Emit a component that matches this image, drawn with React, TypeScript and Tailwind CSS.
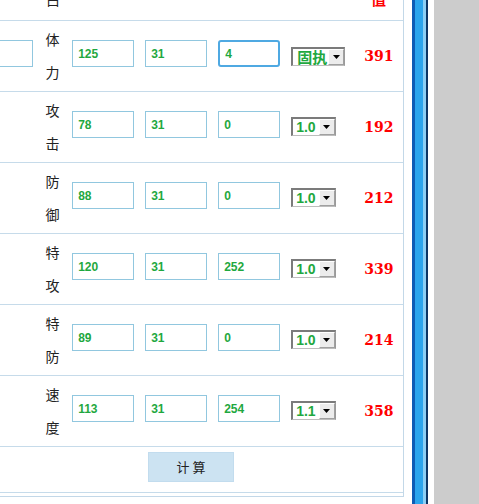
import React from "react";

const rows = [
  { a: "体", b: "力", v: ["125", "31", "4"], sel: "固执", res: "391", focus: true, left: true },
  { a: "攻", b: "击", v: ["78", "31", "0"], sel: "1.0", res: "192" },
  { a: "防", b: "御", v: ["88", "31", "0"], sel: "1.0", res: "212" },
  { a: "特", b: "攻", v: ["120", "31", "252"], sel: "1.0", res: "339" },
  { a: "特", b: "防", v: ["89", "31", "0"], sel: "1.0", res: "214" },
  { a: "速", b: "度", v: ["113", "31", "254"], sel: "1.1", res: "358" },
];

function Inp({ v, focus }: { v: string; focus?: boolean }) {
  return (
    <input
      readOnly
      value={v}
      className={
        "w-[62px] h-[27px] bg-white text-[12px] font-bold text-[#1fa83f] outline-none [font-family:'Liberation_Sans',Arial,sans-serif] " +
        (focus
          ? "border-2 border-[#4fa9e2] rounded-[3px] pl-[5px]"
          : "border border-[#91c7df] pl-[5px]")
      }
    />
  );
}

function Sel({ v }: { v: string }) {
  const cjk = /[^\x00-\x7f]/.test(v);
  return (
    <div className="inline-flex h-[19px] bg-white border-t-2 border-l-2 border-t-[#7b7b7b] border-l-[#7b7b7b] border-b border-r border-b-[#bdbdbd] border-r-[#9a9a9a]">
      <div
        className={
          "flex items-center font-bold text-[#1fa83f] " +
          (cjk
            ? "text-[15px] pl-[4px] pr-[1px] [font-family:'Noto_Sans_CJK_SC',sans-serif]"
            : "text-[14px] pl-[3px] pr-[3px] [font-family:'Liberation_Sans',Arial,sans-serif]")
        }
      >
        {v}
      </div>
      <div className="w-[16px] flex items-center justify-center bg-[#ececec] border-t border-l border-t-white border-l-white border-b border-r border-b-[#a0a0a0] border-r-[#a0a0a0]">
        <svg width="7" height="4" viewBox="0 0 7 4">
          <path d="M0 0H7L3.5 4Z" fill="#000" />
        </svg>
      </div>
    </div>
  );
}

export default function App() {
  return (
    <div className="w-[479px] h-[504px] flex bg-white overflow-hidden [font-family:'Noto_Sans_CJK_SC',sans-serif]">
      <div className="w-[404px] h-[497px] border-r border-b border-[#c3d8e8] pb-[3px] flex flex-col">
        <div className="h-[21px] border-b border-[#c6dbea] flex overflow-hidden">
          <div className="w-[33px]" />
          <div className="w-[40px] h-[20px] overflow-hidden text-center">
            <div className="-mt-[11px] leading-[20px] text-[14px] text-[#222]">白</div>
          </div>
          <div className="w-[281px]" />
          <div className="w-[49px] h-[20px] overflow-hidden text-center">
            <div className="-mt-[11px] leading-[20px] text-[15px] font-bold text-[#ff0000]">值</div>
          </div>
        </div>
        {rows.map((r, i) => (
          <div key={i} className="h-[71px] border-b border-[#c6dbea] flex items-start">
            <div className="w-[33px] h-full overflow-hidden">
              {r.left && (
                <div className="-ml-[29px] mt-[19px] w-[62px] h-[27px] border border-[#91c7df]" />
              )}
            </div>
            <div className="w-[40px] self-center flex flex-col items-center text-[14px] leading-[33px] text-[#222]">
              <span>{r.a}</span>
              <span>{r.b}</span>
            </div>
            <div className="flex gap-[11px] mt-[19px]">
              <Inp v={r.v[0]} />
              <Inp v={r.v[1]} />
              <Inp v={r.v[2]} focus={r.focus} />
            </div>
            <div className={"w-[56px] ml-[11px] flex " + (i === 0 ? "mt-[26px]" : "mt-[25px]")}>
              <Sel v={r.sel} />
            </div>
            <div className="w-[49px] ml-[8px] self-center text-center text-[14px] font-bold text-[#ff0000] [font-family:'DejaVu_Serif',serif]">
              {r.res}
            </div>
          </div>
        ))}
        <div className="h-[46px] border-b border-[#c6dbea] flex items-start">
          <div className="ml-[148px] mt-[5px] w-[86px] h-[30px] bg-[#cce3f2] border border-[#c2dcee] flex items-center justify-center text-[13px] text-[#222]">
            计 算
          </div>
        </div>
      </div>
      <div className="w-[8px]" />
      <div className="w-[16px] h-full flex">
        <div className="w-[3px] bg-[#0d5bb5]" />
        <div className="w-[8px] bg-[#2ba4ec]" />
        <div className="w-[3px] bg-[#8ccff5]" />
        <div className="w-[2px] bg-[#0a3566]" />
      </div>
      <div className="w-[6px]" />
      <div className="flex-1 bg-[#cccccc]" />
    </div>
  );
}
